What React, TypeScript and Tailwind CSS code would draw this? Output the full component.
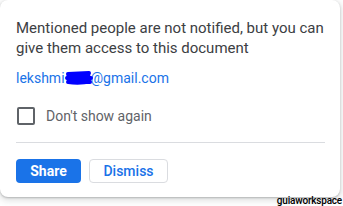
import React from "react";

export default function App() {
  return (
    <div className="relative w-[343px] h-[206px] bg-white overflow-hidden" style={{ fontFamily: "Roboto, 'Noto Sans', sans-serif" }}>
      <div className="w-[340px] h-[197px] bg-white rounded-lg shadow-[0_1px_2px_rgba(60,64,67,0.3),0_2px_6px_2px_rgba(60,64,67,0.15)] pl-4 pr-[10px] pt-[18px]">
        <p className="text-[15px] leading-[20px] text-[#3c4043]">
          Mentioned people are not notified, but you can give them access to this document
        </p>
        <div className="relative mt-[10px] text-[14px] leading-[20px] text-[#1a73e8]">
          lekshmi<span className="inline-block w-[26px]"></span>@gmail.com
          <svg className="absolute left-[49px] top-[2px]" width="28" height="16" viewBox="0 0 28 16">
            <path d="M2 4 C8 1 17 2 25 3 L26 13 C19 15 10 15 3 14 L1 8 Z" fill="#0000ff" />
            <path d="M3 4 L24 3 M2 8 L26 8 M3 12 L25 12" stroke="#0000ff" strokeWidth="4" strokeLinecap="round" />
          </svg>
        </div>
        <div className="flex items-center mt-[19px] h-[18px]">
          <div className="w-[18px] h-[18px] border-2 border-[#5f6368] rounded-[2px] ml-px" />
          <span className="ml-[11px] text-[14px] text-[#5f6368] leading-[20px]">Don't show again</span>
        </div>
        <div className="mt-[17px] mr-[5px] h-px bg-[#dadce0]" />
        <div className="flex gap-2 mt-4">
          <button className="w-[65px] h-[24px] bg-[#1a73e8] text-white text-[14px] font-bold rounded-[4px] leading-none">Share</button>
          <button className="w-[79px] h-[24px] border border-[#dadce0] text-[#1a73e8] text-[14px] font-medium rounded-[4px] leading-none">Dismiss</button>
        </div>
      </div>
      <span className="absolute right-[1px] top-[195px] text-[10px] leading-[12px] tracking-[-0.2px] font-medium text-black">guiaworkspace</span>
    </div>
  );
}
